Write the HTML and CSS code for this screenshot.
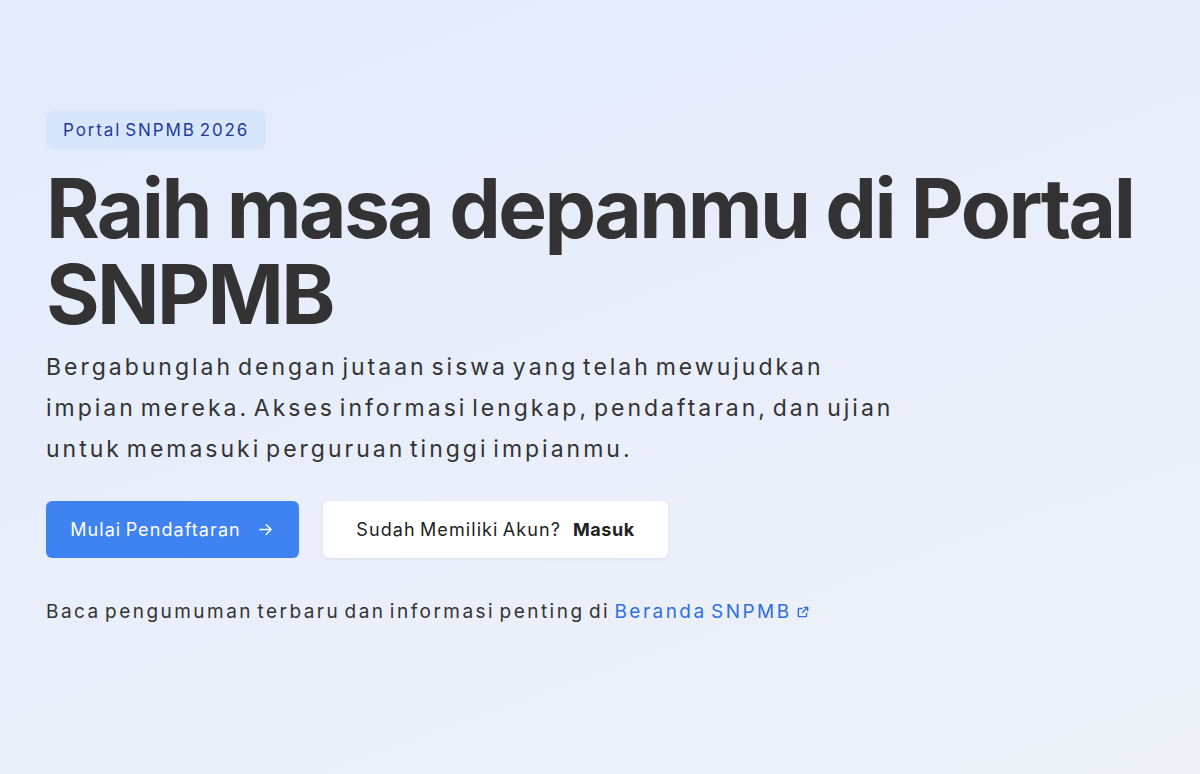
FILE: index.html
```html
<!DOCTYPE html>
<html lang="id">
<head>
<meta charset="utf-8">
<title>Portal SNPMB</title>
<link rel="stylesheet" href="styles.css">
</head>
<body>
<main class="hero">
  <span class="badge">Portal SNPMB 2026</span>
  <h1 class="title">Raih masa depanmu di Portal SNPMB</h1>
  <p class="lead">Bergabunglah dengan jutaan siswa yang telah mewujudkan impian mereka. Akses informasi lengkap, pendaftaran, dan ujian untuk memasuki perguruan tinggi impianmu.</p>
  <div class="actions">
    <a class="btn btn-primary" href="#">Mulai Pendaftaran
      <svg class="arrow" width="19" height="19" viewBox="0 0 24 24" fill="none" stroke="currentColor" stroke-width="2" stroke-linecap="round" stroke-linejoin="round"><path d="M5 12h14M13 6l6 6-6 6"/></svg>
    </a>
    <a class="btn btn-light" href="#">Sudah Memiliki Akun?<strong>Masuk</strong></a>
  </div>
  <p class="note">Baca pengumuman terbaru dan informasi penting di <a class="link" href="#">Beranda SNPMB<svg class="ext" width="14" height="14" viewBox="0 0 24 24" fill="none" stroke="currentColor" stroke-width="2.4" stroke-linecap="round" stroke-linejoin="round"><path d="M14 4h6v6M20 4l-9 9M18 14v5a1 1 0 0 1-1 1H5a1 1 0 0 1-1-1V7a1 1 0 0 1 1-1h5"/></svg></a></p>
</main>
</body>
</html>
```

FILE: styles.css
```css
* { box-sizing: border-box; }
html, body { margin: 0; height: 100%; }
body {
  font-family: Inter, "Noto Sans", sans-serif;
  color: #333333;
  background: linear-gradient(160deg, #e2eafb 0%, #e8eefb 45%, #eef1f8 100%);
}
.hero {
  padding: 110px 46px 0;
  display: flex;
  flex-direction: column;
  align-items: flex-start;
}
.badge {
  display: inline-block;
  background: #d8e6fc;
  color: #1e3a9a;
  font-size: 17px;
  letter-spacing: 0.11em;
  word-spacing: -0.15em;
  padding: 9px 17px;
  border-radius: 8px;
  line-height: 22px;
}
.title {
  margin: 16px 0 0;
  font-size: 82px;
  line-height: 86px;
  font-weight: 700;
  letter-spacing: -2.6px;
  color: #333333;
  max-width: 1120px;
}
.lead {
  margin: 9px 0 0;
  font-size: 23px;
  line-height: 41px;
  color: #333333;
  max-width: 860px;
  letter-spacing: 0.13em;
  word-spacing: -0.2em;
}
.actions {
  margin-top: 31px;
  display: flex;
  gap: 24px;
}
.btn {
  display: inline-flex;
  align-items: center;
  justify-content: center;
  height: 57px;
  border-radius: 6px;
  font-size: 18px;
  text-decoration: none;
  letter-spacing: 0.06em;
  word-spacing: -0.1em;
}
.btn-primary {
  width: 253px;
  background: #3f82f2;
  color: #ffffff;
  gap: 15px;
}
.btn-light {
  width: 345px;
  background: #ffffff;
  color: #222222;
  box-shadow: 0 1px 3px rgba(30, 50, 90, 0.08);
}
.btn-light strong { font-weight: 700; margin-left: 12px; letter-spacing: 0.03em; }
.note {
  margin: 42px 0 0;
  font-size: 19px;
  color: #333333;
  letter-spacing: 0.13em;
  word-spacing: -0.18em;
}
.link {
  color: #2f6fe0;
  text-decoration: none;
}
.ext { margin-left: 4px; vertical-align: -1px; }
```
